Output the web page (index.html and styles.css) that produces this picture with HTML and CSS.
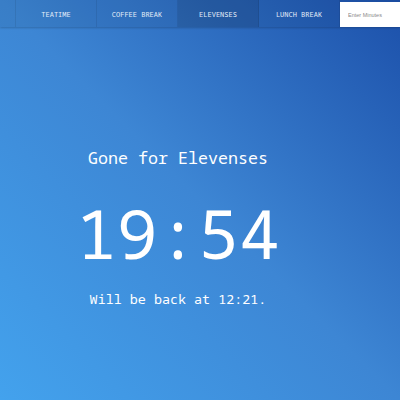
FILE: index.html
```
<!DOCTYPE html>
<html>
<head>
<meta charset="utf-8">
<link rel="stylesheet" href="styles.css">
</head>
<body>
<nav class="nav">
  <div class="spacer"></div>
  <a class="tab">TEATIME</a>
  <a class="tab">COFFEE BREAK</a>
  <a class="tab active">ELEVENSES</a>
  <a class="tab">LUNCH BREAK</a>
  <input class="minutes" type="text" placeholder="Enter Minutes">
</nav>
<main class="main">
  <h1 class="title">Gone for Elevenses</h1>
  <div class="clock">19:54</div>
  <p class="back">Will be back at 12:21.</p>
</main>
</body>
</html>
```
FILE: styles.css
```
html, body {
  margin: 0;
  height: 100%;
}
body {
  background: linear-gradient(45deg, #43a2ed 0%, #3d86d4 50%, #1c50aa 100%);
  font-family: "Noto Sans Mono", "DejaVu Sans Mono", monospace;
  color: #fff;
  overflow: hidden;
}
.nav {
  display: flex;
  height: 27px;
  background: rgba(0, 0, 0, 0.06);
  box-shadow: 0 1px 2px rgba(0, 0, 0, 0.2);
}
.spacer {
  flex: 1;
  border-right: 1px solid rgba(0, 0, 0, 0.08);
}
.tab {
  width: 80px;
  display: flex;
  align-items: center;
  justify-content: center;
  padding-top: 2px;
  font-size: 7px;
  color: #e4edf9;
  border-right: 1px solid rgba(0, 0, 0, 0.08);
}
.tab.active {
  background: rgba(0, 0, 0, 0.1);
}
.minutes {
  width: 60px;
  box-sizing: border-box;
  margin: 2px 0 0 0;
  height: 25px;
  border: none;
  outline: none;
  padding: 0 8px;
  font-family: "Liberation Sans", Arial, sans-serif;
  font-size: 5.5px;
  background: #fff;
}
.minutes::placeholder {
  color: #8a8a8a;
}
.main {
  display: flex;
  flex-direction: column;
  align-items: center;
  padding-top: 120px;
  padding-right: 44px;
}
.title {
  margin: 0;
  font-weight: normal;
  font-size: 16.7px;
  line-height: 22px;
}
.clock {
  font-size: 68px;
  line-height: 80px;
  margin-top: 24px;
}
.back {
  margin: 17px 0 0;
  font-size: 13.4px;
  line-height: 18px;
}
```
